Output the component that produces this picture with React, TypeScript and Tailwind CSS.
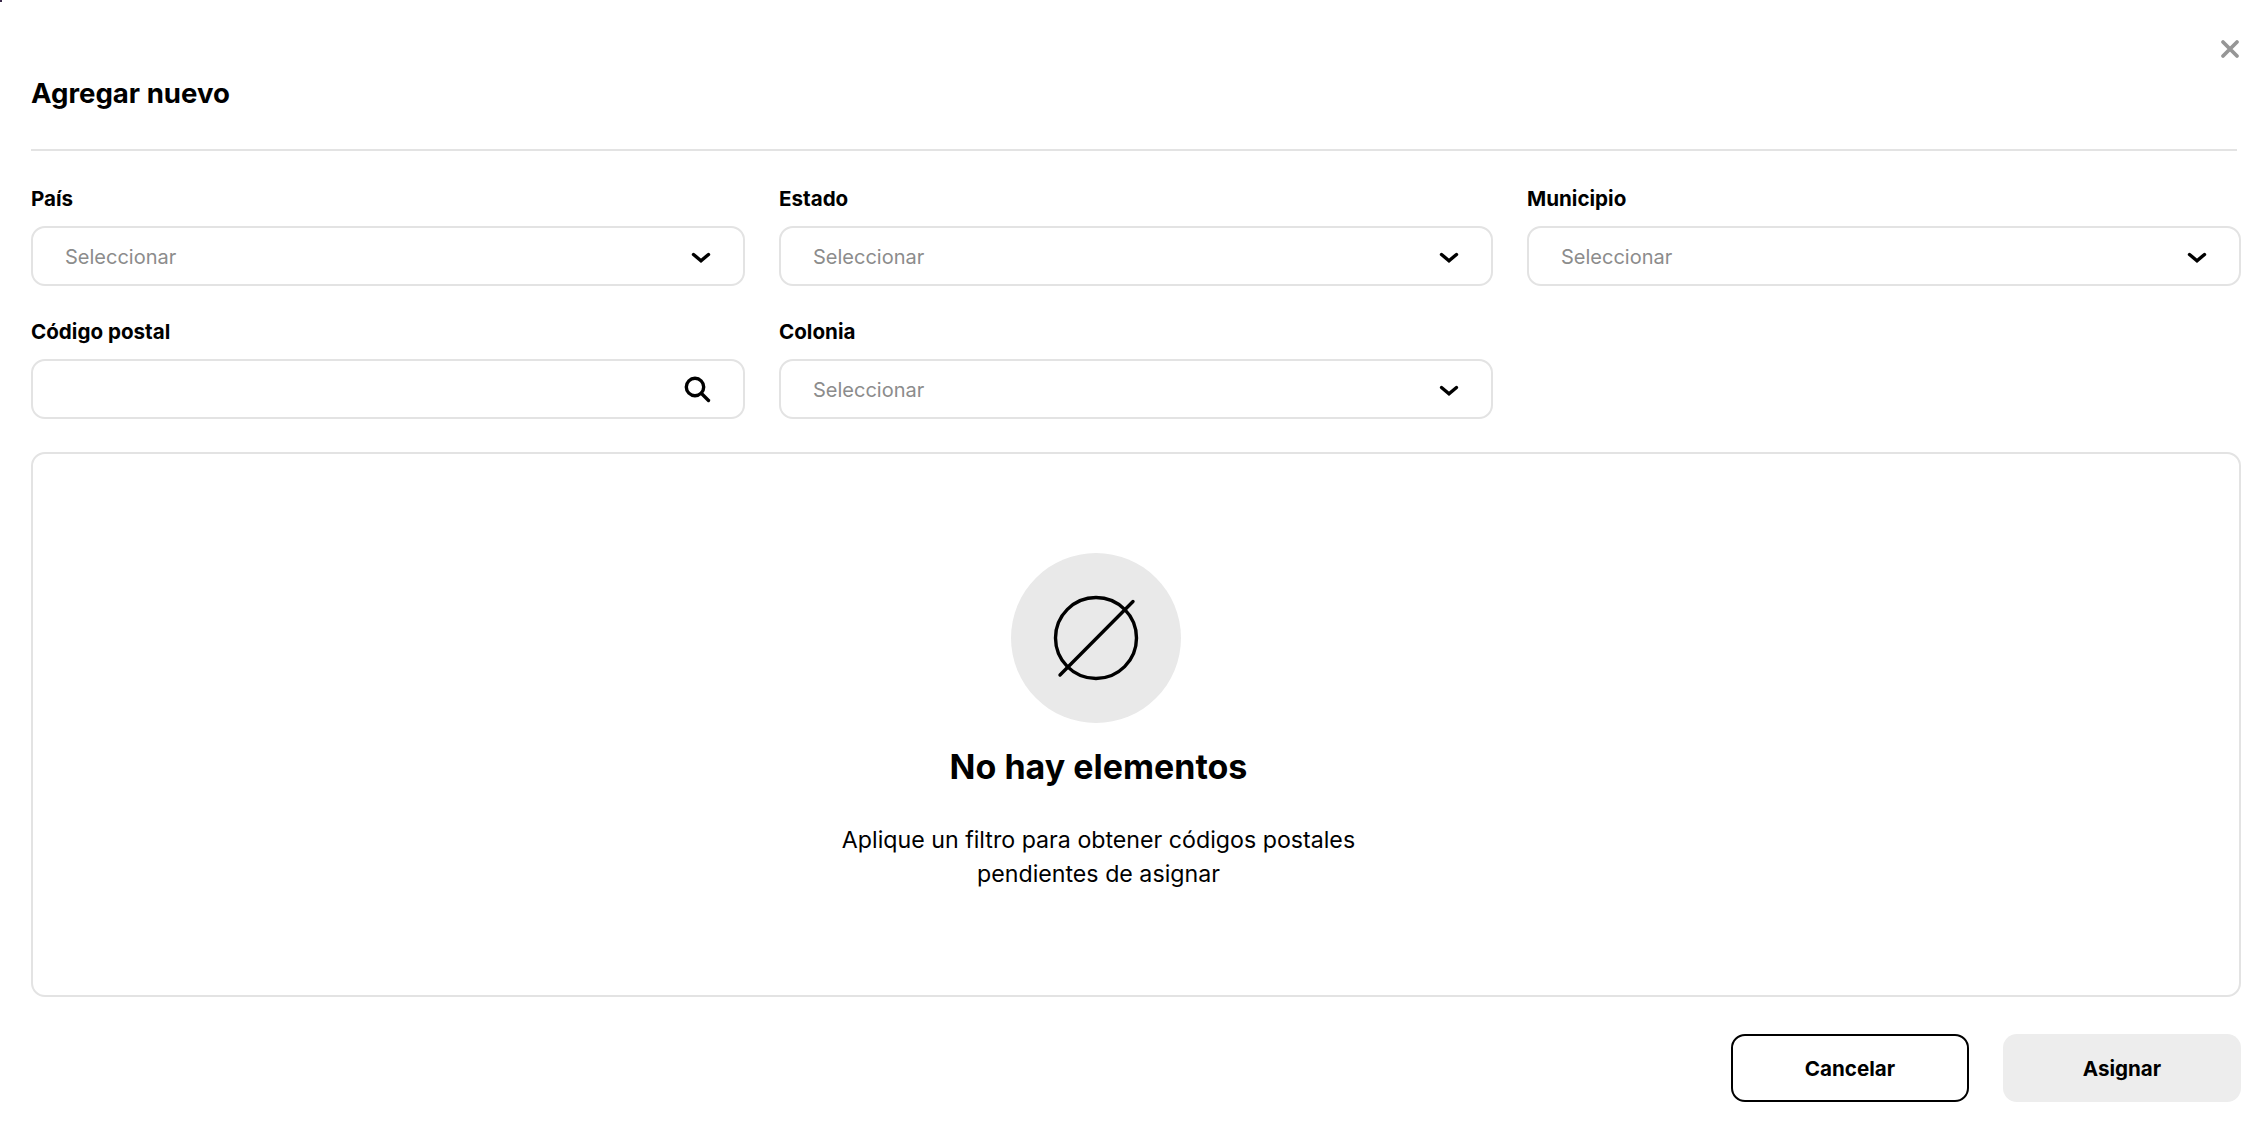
import React from "react";

function Chevron() {
  return (
    <svg width="20" height="12" viewBox="0 0 20 12" fill="none" className="shrink-0">
      <path d="M2.5 2.5 L10 8.7 L17.5 2.5" stroke="#000" strokeWidth="3.4" strokeLinecap="round" strokeLinejoin="miter" />
    </svg>
  );
}

function Field({ label, search }: { label: string; search?: boolean }) {
  return (
    <div className="flex flex-col">
      <div className="h-[28px] mb-[13px] text-[20.6px] leading-[28px] font-bold text-black">{label}</div>
      <div className="h-[60px] rounded-[14px] border-2 border-[#e3e3e3] bg-white flex items-center justify-between pl-[32px] pr-[32px]">
        {search ? (
          <>
            <span />
            <svg width="27" height="27" viewBox="0 0 27 27" fill="none" className="shrink-0">
              <circle cx="11" cy="11" r="8.7" stroke="#000" strokeWidth="3.4" />
              <path d="M17.5 17.5 L24.5 24.5" stroke="#000" strokeWidth="3.4" strokeLinecap="round" />
            </svg>
          </>
        ) : (
          <>
            <span className="text-[20px] leading-[30px] mt-[1px] text-[#8c8c8c]">Seleccionar</span>
            <span className="mt-[3px] flex"><Chevron /></span>
          </>
        )}
      </div>
    </div>
  );
}

export default function App() {
  return (
    <div className="relative h-[1138px] w-full bg-white font-['Inter','Liberation_Sans',sans-serif] text-black overflow-hidden">
      <div className="absolute left-0 top-0 w-[2px] h-[2px] bg-[#3a2a4a]" />
      <button className="absolute left-[2220px] top-[39px] w-[20px] h-[20px]">
        <svg width="20" height="20" viewBox="0 0 20 20" fill="none">
          <path d="M3 3 L17 17 M17 3 L3 17" stroke="#969696" strokeWidth="3.8" strokeLinecap="round" />
        </svg>
      </button>
      <div className="flex flex-col pl-[31px] pr-[27px]">
        <div className="h-[151px] w-[2206px] border-b-2 border-[#e3e3e3] pt-[73px]">
          <h1 className="text-[27.6px] leading-[40px] font-bold">Agregar nuevo</h1>
        </div>
        <div className="grid grid-cols-3 gap-x-[34px] gap-y-[32px] mt-[34px]">
          <Field label="País" />
          <Field label="Estado" />
          <Field label="Municipio" />
          <Field label="Código postal" search />
          <Field label="Colonia" />
        </div>
        <div className="mt-[33px] h-[545px] rounded-[14px] border-2 border-[#e3e3e3] flex flex-col items-center pt-[99px] pr-[75px]">
          <div className="w-[170px] h-[170px] rounded-full bg-[#e9e9e9] flex items-center justify-center -ml-[6px]">
            <svg width="90" height="90" viewBox="0 0 90 90" fill="none">
              <circle cx="45" cy="45" r="40.5" stroke="#000" strokeWidth="3.4" />
              <path d="M9 82 L82 8.5" stroke="#000" strokeWidth="3.4" strokeLinecap="round" />
            </svg>
          </div>
          <h2 className="mt-[22px] text-[34px] leading-[44px] font-bold">No hay elementos</h2>
          <p className="mt-[34px] text-[23.2px] leading-[34px] text-center">
            Aplique un filtro para obtener códigos postales
            <br />
            pendientes de asignar
          </p>
        </div>
        <div className="mt-[37px] flex justify-end gap-[34px]">
          <button className="w-[238px] h-[68px] pt-[2px] rounded-[14px] border-2 border-black bg-white text-[20.6px] font-bold">Cancelar</button>
          <button className="w-[238px] h-[68px] pt-[2px] rounded-[14px] bg-[#ededed] text-[20.6px] font-bold">Asignar</button>
        </div>
      </div>
    </div>
  );
}
